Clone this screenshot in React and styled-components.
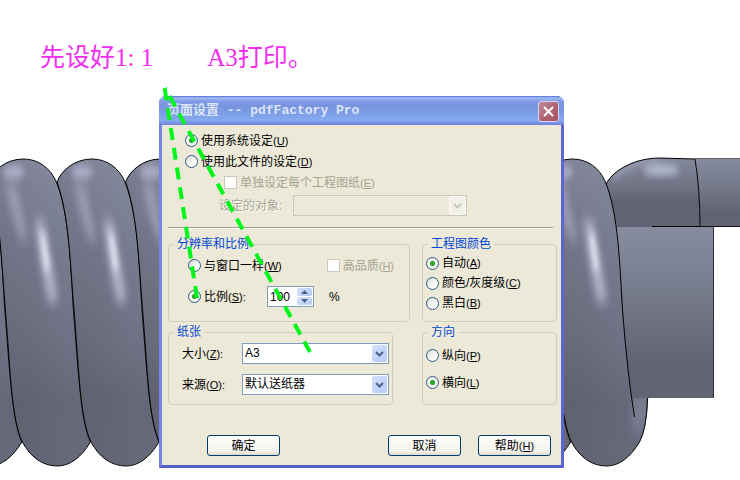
import React, { useState } from 'react';
import styled, { createGlobalStyle } from 'styled-components';

const GlobalStyle = createGlobalStyle`
  * {
    box-sizing: border-box;
  }
  body {
    margin: 0;
    background: #fff;
    font-family: 'Liberation Sans', 'Noto Sans CJK SC', sans-serif;
    font-size: 12px;
    line-height: 14px;
    color: #000;
  }
  button, input, select {
    font: inherit;
    color: inherit;
  }
`;

const Page = styled.main`
  position: relative;
  min-height: 100vh;
  overflow: hidden;
`;

const Drawing = styled.svg`
  position: absolute;
  top: 0;
  left: 0;
  pointer-events: none;
`;

const Note = styled.h1`
  position: relative;
  display: flex;
  gap: 54px;
  margin: 0;
  padding: 40px 0 20px 40px;
  font-family: 'Liberation Serif', 'Noto Sans CJK SC', serif;
  font-size: 25px;
  font-weight: 400;
  line-height: 36px;
  color: #f32df0;
`;

const Dialog = styled.section`
  position: relative;
  margin: 0 176px 12px 159px;
  min-width: 405px;
  border: 3px solid #6a78de;
  border-top: 0;
  border-left-color: #7585e4;
  border-right-color: #5d66d0;
  border-bottom-color: #5660c8;
  border-radius: 7px 7px 0 0;
  background: #ece9d8;
`;

const TitleBar = styled.header`
  display: flex;
  align-items: center;
  justify-content: space-between;
  height: 29px;
  margin: 0 -3px;
  padding: 1px 5px 0 8px;
  border-radius: 7px 7px 0 0;
  background: linear-gradient(
    #4f6fd8 0,
    #a3bdf3 2px,
    #819ce8 5px,
    #7893de 10px,
    #7d9de7 17px,
    #84aaee 24px,
    #7b90e4 27px,
    #6f7fd8 29px
  );
`;

const Title = styled.h2`
  margin: 0;
  font-family: 'Liberation Mono', 'Noto Sans CJK SC', monospace;
  font-size: 13px;
  font-weight: bold;
  line-height: 20px;
  white-space: pre;
  color: #dbe5fb;
`;

const CloseButton = styled.button`
  display: grid;
  place-items: center;
  width: 21px;
  height: 21px;
  padding: 0;
  border: 1px solid #d3d5f3;
  border-radius: 3px;
  background: linear-gradient(135deg, #c08a9f, #b0606f 60%, #a8525c);
`;

const Body = styled.form`
  padding: 5px 4px 9px 6px;
`;

const Row = styled.div`
  display: flex;
  align-items: center;
  height: ${(props) => props.$height || 21}px;
  margin-top: ${(props) => props.$top || 0}px;
  padding-left: ${(props) => props.$indent || 0}px;
  padding-right: ${(props) => props.$end || 0}px;
  justify-content: ${(props) => (props.$spread ? 'space-between' : 'flex-start')};
`;

const OptionLabel = styled.label`
  display: flex;
  align-items: center;
  gap: 3px;
  white-space: nowrap;
  color: ${(props) => (props.$disabled ? '#a5a492' : '#000')};
`;

const Radio = styled.input.attrs({ type: 'radio' })`
  appearance: none;
  width: 13px;
  height: 13px;
  margin: 0;
  border: 1px solid #2b5783;
  border-radius: 50%;
  background: linear-gradient(135deg, #dcdcd6, #fff 75%);
  &:checked {
    background: radial-gradient(
      circle,
      #2fb32b 0,
      #22a11f 2px,
      #f4f5f0 3px,
      #f4f5f0 100%
    );
  }
`;

const Checkbox = styled.input.attrs({ type: 'checkbox' })`
  appearance: none;
  width: 13px;
  height: 13px;
  margin: 0;
  border: 1px solid #cac8bb;
  background: #fff;
`;

const MnemonicText = styled.span`
  font-size: 11px;
  u {
    text-underline-offset: 1px;
  }
`;

const FieldLabel = styled.label`
  flex: none;
  width: ${(props) => props.$width}px;
  white-space: nowrap;
  color: ${(props) => (props.$disabled ? '#a5a492' : '#000')};
  text-shadow: ${(props) => (props.$disabled ? '1px 1px 0 #fff' : 'none')};
`;

const SelectBox = styled.div`
  position: relative;
  flex: 1;
  max-width: ${(props) => props.$max || 'none'};
  height: 21px;
`;

const Select = styled.select`
  appearance: none;
  display: block;
  width: 100%;
  height: 21px;
  padding: 0 20px 0 2px;
  border: 1px solid #7f9db9;
  border-radius: 0;
  background: #fff;
  line-height: 19px;
  opacity: 1;
  &:disabled {
    border-color: #c9c7ba;
    background: #ece9d8;
  }
`;

const Arrow = styled.span`
  position: absolute;
  top: 2px;
  right: 2px;
  display: grid;
  place-items: center;
  width: 15px;
  height: 17px;
  border-radius: 2px;
  pointer-events: none;
  color: ${(props) => (props.$disabled ? '#c9c7ba' : '#4d6185')};
  background: ${(props) =>
    props.$disabled ? '#f1f0e9' : 'linear-gradient(135deg, #d6e2fd, #b4c9f8)'};
  box-shadow: 0 0 0 1px ${(props) => (props.$disabled ? '#fbfaf6' : '#fff')};
`;

const Divider = styled.hr`
  height: 2px;
  margin: 11px 4px 8px 0;
  border: 0;
  border-top: 1px solid #9d9b8e;
  border-bottom: 1px solid #fff;
`;

const Groups = styled.div`
  display: grid;
  grid-template-columns: 1fr 135px;
  gap: 3px 12px;
`;

const Group = styled.fieldset`
  min-width: 0;
  margin: 0 ${(props) => props.$right || 0}px 0 0;
  padding: 0 0 ${(props) => props.$bottom || 0}px;
  border: 1px solid #d0d0bf;
  border-radius: 4px;
`;

const Legend = styled.legend`
  margin-left: 5px;
  padding: 0 3px;
  color: #0046d5;
`;

const Spinner = styled.div`
  display: flex;
  width: 47px;
  height: 21px;
  margin-right: 15px;
  padding: 1px;
  border: 1px solid #7f9db9;
  background: #fff;
`;

const SpinnerInput = styled.input`
  flex: 1;
  min-width: 0;
  padding: 0 0 0 1px;
  border: 0;
  outline: 0;
  background: transparent;
`;

const SpinnerButtons = styled.div`
  display: grid;
  grid-template-rows: 1fr 1fr;
  gap: 1px;
  width: 15px;
`;

const SpinnerButton = styled.button`
  display: grid;
  place-items: center;
  padding: 0;
  border: 0;
  border-radius: 2px;
  color: #4d6185;
  background: linear-gradient(135deg, #d6e2fd, #b4c9f8);
`;

const Actions = styled.footer`
  display: flex;
  gap: 17px;
  margin-top: 30px;
  padding: 0 6px 0 39px;
`;

const ActionButton = styled.button.attrs({ type: 'button' })`
  width: 73px;
  height: 21px;
  padding: 0;
  border: 1px solid #003c74;
  border-radius: 3px;
  background: linear-gradient(#fff, #f3f2ec 80%, #dedacb);
  &:first-child {
    margin-right: auto;
  }
`;

const Mnemonic = ({ letter, colon }) => (
  <MnemonicText>
    (<u>{letter}</u>){colon ? ':' : ''}
  </MnemonicText>
);

const RadioOption = ({ name, value, current, onPick, text, letter, colon }) => (
  <OptionLabel>
    <Radio
      name={name}
      value={value}
      checked={current === value}
      onChange={() => onPick(value)}
    />
    <span>
      {text}
      <Mnemonic letter={letter} colon={colon} />
    </span>
  </OptionLabel>
);

const DisabledCheck = ({ text, letter }) => (
  <OptionLabel $disabled>
    <Checkbox disabled />
    <span>
      {text}
      <Mnemonic letter={letter} />
    </span>
  </OptionLabel>
);

const DropDown = ({ id, options = [], disabled, max }) => (
  <SelectBox $max={max}>
    <Select id={id} disabled={disabled}>
      {options.map((option) => (
        <option key={option}>{option}</option>
      ))}
    </Select>
    <Arrow $disabled={disabled}>
      <svg width="9" height="6" viewBox="0 0 9 6">
        <path
          d="M1 1l3.500 3.500L8 1"
          fill="none"
          stroke="currentColor"
          strokeWidth="2"
        />
      </svg>
    </Arrow>
  </SelectBox>
);

const TUBE =
  'M57 182C61 171 74 159 92 159C107 159 119 168 125 182C138 215 139 262 142 310C147 370 149 420 159 442C150 457 139 466 126 466C111 466 99 457 91 442C80 420 79 370 74 310C70 262 69 215 57 182Z';

// the outermost turn is wider at the bottom, where nothing covers it
const END_TUBE =
  'M57 182C61 171 74 159 92 159C107 159 119 168 125 182C138 215 139 262 142 310C145 345 149 385 152 398H168Q166 430 159 442C150 457 139 466 126 466C111 466 99 457 91 442C80 420 79 370 74 310C70 262 69 215 57 182Z';

const Highlights = () => (
  <g>
    <ellipse cx="82" cy="172" rx="11" ry="7" fill="#b3b7d0" opacity="0.85" filter="url(#soft)" />
    <path d="M74 182L84 184L97 242L90 240Q82 225 74 182Z" fill="#b0b3ca" opacity="0.65" filter="url(#softer)" />
    <path d="M103 218L113 222Q120 262 127 302L117 302Q108 262 103 218Z" fill="#bfc3d8" opacity="0.85" filter="url(#softer)" />
    <path d="M109 232L113 235L118 270L114 270Z" fill="#f4f6ff" filter="url(#soft)" />
  </g>
);

const Coil = () => (
  <Drawing width="740" height="480" viewBox="0 0 740 480" aria-hidden="true">
    <defs>
      <linearGradient id="tube" gradientUnits="userSpaceOnUse" x1="125" y1="160" x2="96" y2="440">
        <stop offset="0" stopColor="#888ca0" />
        <stop offset="0.3" stopColor="#777b8e" />
        <stop offset="0.65" stopColor="#6b6e7e" />
        <stop offset="0.85" stopColor="#616372" />
        <stop offset="1" stopColor="#626473" />
      </linearGradient>
      <linearGradient id="side" x1="0" y1="0" x2="1" y2="0">
        <stop offset="0" stopColor="#4c4e5c" stopOpacity="0.2" />
        <stop offset="0.4" stopColor="#60626f" stopOpacity="0.15" />
        <stop offset="0.8" stopColor="#8086a0" stopOpacity="0.15" />
      </linearGradient>
      <linearGradient id="block" x1="0" y1="0" x2="0" y2="1">
        <stop offset="0" stopColor="#868b9e" />
        <stop offset="0.4" stopColor="#757a8b" />
        <stop offset="0.8" stopColor="#616372" />
        <stop offset="1" stopColor="#626473" />
      </linearGradient>
      <filter id="soft" x="-100%" y="-50%" width="300%" height="200%">
        <feGaussianBlur stdDeviation="2.500 4" />
      </filter>
      <filter id="softer" x="-100%" y="-50%" width="300%" height="200%">
        <feGaussianBlur stdDeviation="3.500 7" />
      </filter>
      <clipPath id="bend">
        <path d="M606 184C614 169 636 158 660 158L695 159Q700 190 700 227L613 227Z" />
      </clipPath>
      <clipPath id="turn">
        <path d={TUBE} />
      </clipPath>
      <clipPath id="end">
        <path d={END_TUBE} />
      </clipPath>
    </defs>
    <path d="M695 158H740V226H700Q700 190 695 158Z" fill="url(#block)" />
    <path d="M695 158.500H740" stroke="#666" />
    <path d="M699 226.500H740" stroke="#111" />
    <g clipPath="url(#bend)">
      <rect x="600" y="155" width="105" height="60" fill="url(#block)" />
      <rect x="600" y="214" width="105" height="15" fill="#626473" />
      <ellipse cx="661" cy="170" rx="18" ry="5" fill="#bfc3d8" filter="url(#soft)" />
      <path d="M612 178Q630 161 660 158" stroke="#a9adc4" strokeWidth="4" fill="none" filter="url(#soft)" />
    </g>
    <path d="M606 184C614 169 636 158 660 158L695 159Q700 190 700 226" fill="none" stroke="#000" />
    <path d="M652 226.500H700" stroke="#000" />
    <path d="M608 227H714V398H608Z" fill="url(#block)" />
    <path d="M713.500 227V398" stroke="#30303a" />
    {[-2, -1, 0, 1, 2, 6].map((k) => (
      <g key={k} transform={`translate(${k * 68.6})`}>
        <g clipPath="url(#turn)">
          <path d={TUBE} fill="url(#tube)" />
          <path d={TUBE} fill="url(#side)" />
          <Highlights />
        </g>
        <path d={TUBE} fill="none" stroke="#000" />
      </g>
    ))}
    <g transform="translate(480.500)">
      <g clipPath="url(#end)">
        <path d={END_TUBE} fill="url(#tube)" />
        <path d={END_TUBE} fill="url(#side)" />
        <path d="M152 394H170V430L156 436L150 425Z" fill="#7d8195" opacity="0.8" filter="url(#softer)" />
        <Highlights />
      </g>
      <path
        d="M57 182C61 171 74 159 92 159C107 159 119 168 125 182C138 215 139 262 142 310Q147 375 154 417M167 398Q166 430 159 442C150 457 139 466 126 466C111 466 99 457 91 442C80 420 79 370 74 310"
        fill="none"
        stroke="#000"
      />
    </g>
  </Drawing>
);

const Pointers = () => (
  <Drawing width="740" height="480" viewBox="0 0 740 480" aria-hidden="true">
    <g stroke="#00f51a" strokeWidth="4" strokeDasharray="12 8" fill="none">
      <path d="M197 298L164 84" />
      <path d="M310 352L165 88" />
    </g>
  </Drawing>
);

const App = () => {
  const [source, setSource] = useState('system');
  const [scaling, setScaling] = useState('ratio');
  const [color, setColor] = useState('auto');
  const [direction, setDirection] = useState('landscape');
  const [ratio, setRatio] = useState(100);

  return (
    <Page>
      <GlobalStyle />
      <Coil />
      <Note>
        <span>先设好1: 1</span>
        <span>A3打印。</span>
      </Note>
      <Dialog role="dialog" aria-labelledby="title">
        <TitleBar>
          <Title id="title">页面设置 -- pdfFactory Pro</Title>
          <CloseButton type="button" aria-label="关闭">
            <svg width="13" height="13" viewBox="0 0 13 13">
              <path d="M2 2l9 9M11 2l-9 9" stroke="#fff" strokeWidth="2" />
            </svg>
          </CloseButton>
        </TitleBar>
        <Body>
          <Row $indent={17}>
            <RadioOption name="source" value="system" current={source} onPick={setSource} text="使用系统设定" letter="U" />
          </Row>
          <Row $indent={17}>
            <RadioOption name="source" value="file" current={source} onPick={setSource} text="使用此文件的设定" letter="D" />
          </Row>
          <Row $indent={56}>
            <DisabledCheck text="单独设定每个工程图纸" letter="E" />
          </Row>
          <Row $indent={51} $top={2}>
            <FieldLabel htmlFor="target" $width={74} $disabled>
              设定的对象:
            </FieldLabel>
            <DropDown id="target" max="174px" disabled />
          </Row>
          <Divider />
          <Groups>
            <Group $bottom={14}>
              <Legend>分辨率和比例</Legend>
              <Row $indent={19} $end={15} $top={4} $spread>
                <RadioOption name="scaling" value="window" current={scaling} onPick={setScaling} text="与窗口一样" letter="W" />
                <DisabledCheck text="高品质" letter="H" />
              </Row>
              <Row $indent={19} $top={10}>
                <FieldLabel as="div" $width={79}>
                  <RadioOption name="scaling" value="ratio" current={scaling} onPick={setScaling} text="比例" letter="S" colon />
                </FieldLabel>
                <Spinner>
                  <SpinnerInput
                    aria-label="比例"
                    value={ratio}
                    onChange={(e) => setRatio(Number(e.target.value) || 0)}
                  />
                  <SpinnerButtons>
                    <SpinnerButton type="button" aria-label="增加" onClick={() => setRatio(ratio + 1)}>
                      <svg width="7" height="4" viewBox="0 0 7 4">
                        <path d="M0 4L3.500 0L7 4Z" fill="currentColor" />
                      </svg>
                    </SpinnerButton>
                    <SpinnerButton type="button" aria-label="减少" onClick={() => setRatio(ratio - 1)}>
                      <svg width="7" height="4" viewBox="0 0 7 4">
                        <path d="M0 0L3.500 4L7 0Z" fill="currentColor" />
                      </svg>
                    </SpinnerButton>
                  </SpinnerButtons>
                </Spinner>
                %
              </Row>
            </Group>
            <Group>
              <Legend>工程图颜色</Legend>
              <Row $indent={3} $top={2} $height={20}>
                <RadioOption name="color" value="auto" current={color} onPick={setColor} text="自动" letter="A" />
              </Row>
              <Row $indent={3} $height={20}>
                <RadioOption name="color" value="gray" current={color} onPick={setColor} text="颜色/灰度级" letter="C" />
              </Row>
              <Row $indent={3} $height={20}>
                <RadioOption name="color" value="mono" current={color} onPick={setColor} text="黑白" letter="B" />
              </Row>
            </Group>
            <Group $right={17} $bottom={9}>
              <Legend>纸张</Legend>
              <Row $indent={13} $end={3} $top={4}>
                <FieldLabel htmlFor="size" $width={60}>
                  大小
                  <Mnemonic letter="Z" colon />
                </FieldLabel>
                <DropDown id="size" options={['A3', 'A4']} />
              </Row>
              <Row $indent={13} $end={3} $top={10}>
                <FieldLabel htmlFor="tray" $width={60}>
                  来源
                  <Mnemonic letter="O" colon />
                </FieldLabel>
                <DropDown id="tray" options={['默认送纸器']} />
              </Row>
            </Group>
            <Group>
              <Legend>方向</Legend>
              <Row $indent={3} $top={6}>
                <RadioOption name="direction" value="portrait" current={direction} onPick={setDirection} text="纵向" letter="P" />
              </Row>
              <Row $indent={3} $top={6}>
                <RadioOption name="direction" value="landscape" current={direction} onPick={setDirection} text="横向" letter="L" />
              </Row>
            </Group>
          </Groups>
          <Actions>
            <ActionButton>确定</ActionButton>
            <ActionButton>取消</ActionButton>
            <ActionButton>
              帮助
              <Mnemonic letter="H" />
            </ActionButton>
          </Actions>
        </Body>
      </Dialog>
      <Pointers />
    </Page>
  );
};

export default App;
